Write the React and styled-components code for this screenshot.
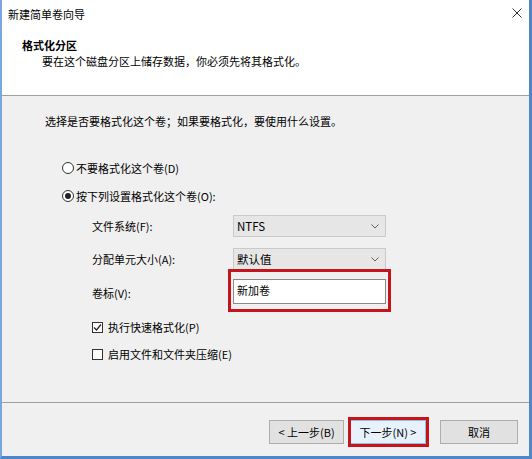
import styled, { createGlobalStyle } from 'styled-components'

const GlobalStyle = createGlobalStyle`
  html, body {
    margin: 0;
    padding: 0;
    background: #ffffff;
  }
  body {
    font-family: "Noto Sans CJK SC", "Noto Sans", sans-serif;
    font-size: 11px;
    color: #000;
  }
`

const Window = styled.div`
  width: 532px;
  height: 459px;
  box-sizing: border-box;
  display: flex;
  flex-direction: column;
  background: #f0f0f0;
  border-left: 2px solid #79a6dc;
  border-right: 3px solid #4f86c9;
  border-bottom: 3px solid #4f86c9;
  overflow: hidden;
`

const TitleBar = styled.div`
  height: 28px;
  flex: none;
  display: flex;
  align-items: center;
  justify-content: space-between;
  padding: 0 7px 0 6px;
  background: #ffffff;
  line-height: 16px;
`

const Close = styled.svg`
  width: 10px;
  height: 10px;
  margin-top: -2px;
`

const Header = styled.div`
  height: 68px;
  flex: none;
  box-sizing: border-box;
  padding: 9px 20px 0;
  background: #ffffff;
  border-bottom: 1px solid #a0a0a0;
  line-height: 16px;
`

const HeaderTitle = styled.div`
  font-weight: bold;
`

const HeaderDesc = styled.div`
  padding-left: 20px;
`

const Body = styled.div`
  flex: 1;
  padding: 17px 0 0 43px;
  line-height: 16px;
  border-bottom: 1px solid #a0a0a0;
`

const Options = styled.div`
  margin: 31px 0 0 17px;
  display: flex;
  flex-direction: column;
  gap: 12px;
`

const Choice = styled.label`
  display: flex;
  align-items: center;
  gap: 2px;
  height: 16px;
`

const Radio = styled.span`
  width: 12px;
  height: 12px;
  box-sizing: border-box;
  border-radius: 50%;
  border: 1px solid #333;
  background: #fff;
  display: grid;
  place-items: center;
  &::after {
    content: '';
    width: 6px;
    height: 6px;
    border-radius: 50%;
    background: ${(p) => (p.$checked ? '#222' : 'transparent')};
  }
`

const Settings = styled.div`
  margin: 11px 0 0 47px;
  display: grid;
  grid-template-columns: 141px 153px;
  row-gap: 11px;
  align-items: center;
`

const FieldLabel = styled.div``

const Combo = styled.div`
  height: 22px;
  box-sizing: border-box;
  border: 1px solid #cacaca;
  background: #e6e6e6;
  display: flex;
  align-items: center;
  justify-content: space-between;
  padding: 0 6px 0 3px;
`

const ComboText = styled.span`
  font-size: 11.5px;
`

const Field = styled.div`
  position: relative;
  margin-top: -2px;
  &::after {
    content: '';
    position: absolute;
    top: -10px;
    bottom: -8px;
    left: -5px;
    right: -5px;
    border: 3px solid #c4141c;
  }
`

const TextBox = styled.div`
  height: 25px;
  box-sizing: border-box;
  border: 1px solid #8a8a8a;
  background: #ffffff;
  padding: 2px 3px 0;
  font-size: 11px;
`

const Checks = styled.div`
  margin: 15px 0 0 47px;
  display: flex;
  flex-direction: column;
  gap: 11px;
`

const Box = styled.span`
  width: 11px;
  height: 11px;
  box-sizing: border-box;
  border: 1px solid #333;
  background: #fff;
  margin-right: 3px;
  display: grid;
  place-items: center;
`

const Footer = styled.div`
  height: 53px;
  flex: none;
  display: flex;
  justify-content: flex-end;
  align-items: flex-start;
  padding: 17px 11px 0 0;
  box-sizing: border-box;
`

const Button = styled.div`
  position: relative;
  width: ${(p) => p.$w}px;
  height: 24px;
  box-sizing: border-box;
  margin-left: ${(p) => p.$gap || 0}px;
  border: 1px solid ${(p) => (p.$primary ? '#8fbbe8' : '#adadad')};
  background: ${(p) => (p.$primary ? '#e8f2fc' : '#e1e1e1')};
  display: flex;
  align-items: center;
  justify-content: center;
  line-height: 16px;
  ${(p) =>
    p.$marked &&
    `
    &::after {
      content: '';
      position: absolute;
      top: -4px;
      bottom: -4px;
      left: -3px;
      right: -4px;
      border: 3px solid #c4141c;
    }
  `}
`

const Chevron = () => (
  <svg width="8" height="5" viewBox="0 0 8 5">
    <path d="M0.5 0.5 L4 4 L7.5 0.5" fill="none" stroke="#606060" strokeWidth="1" />
  </svg>
)

const Tick = () => (
  <svg width="9" height="9" viewBox="0 0 9 9">
    <path d="M1 4.5 L3.5 7 L8 1.5" fill="none" stroke="#222" strokeWidth="1.2" />
  </svg>
)

export default function App() {
  return (
    <>
      <GlobalStyle />
      <Window>
        <TitleBar>
          <span>新建简单卷向导</span>
          <Close viewBox="0 0 10 10">
            <path d="M0.5 0.5 L9.5 9.5 M9.5 0.5 L0.5 9.5" stroke="#333" strokeWidth="1" />
          </Close>
        </TitleBar>
        <Header>
          <HeaderTitle>格式化分区</HeaderTitle>
          <HeaderDesc>要在这个磁盘分区上储存数据，你必须先将其格式化。</HeaderDesc>
        </Header>
        <Body>
          <div>选择是否要格式化这个卷；如果要格式化，要使用什么设置。</div>
          <Options>
            <Choice>
              <Radio />
              不要格式化这个卷(D)
            </Choice>
            <Choice>
              <Radio $checked />
              按下列设置格式化这个卷(O):
            </Choice>
          </Options>
          <Settings>
            <FieldLabel>文件系统(F):</FieldLabel>
            <Combo>
              <ComboText>NTFS</ComboText>
              <Chevron />
            </Combo>
            <FieldLabel>分配单元大小(A):</FieldLabel>
            <Combo>
              <ComboText>默认值</ComboText>
              <Chevron />
            </Combo>
            <FieldLabel>卷标(V):</FieldLabel>
            <Field>
              <TextBox>新加卷</TextBox>
            </Field>
          </Settings>
          <Checks>
            <Choice>
              <Box>
                <Tick />
              </Box>
              执行快速格式化(P)
            </Choice>
            <Choice>
              <Box />
              启用文件和文件夹压缩(E)
            </Choice>
          </Checks>
        </Body>
        <Footer>
          <Button $w={75}>&lt; 上一步(B)</Button>
          <Button $w={76} $gap={6} $primary $marked>
            下一步(N) &gt;
          </Button>
          <Button $w={78} $gap={14}>
            取消
          </Button>
        </Footer>
      </Window>
    </>
  )
}
